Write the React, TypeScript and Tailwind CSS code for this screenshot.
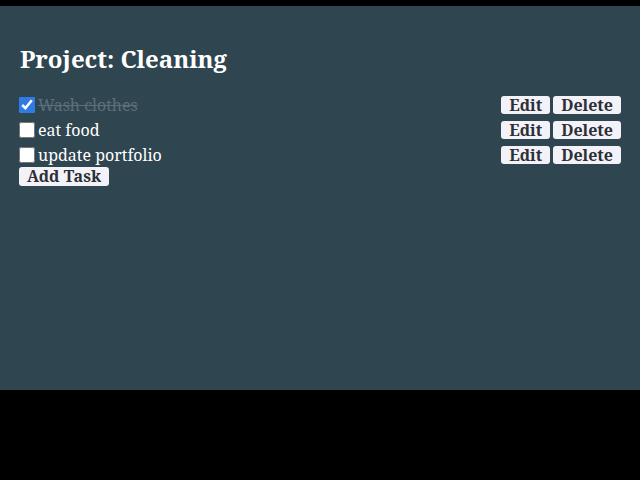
import React, { useState } from 'react';

type Task = { id: number; title: string; done: boolean };

const initialTasks: Task[] = [
  { id: 1, title: 'Wash clothes', done: true },
  { id: 2, title: 'eat food', done: false },
  { id: 3, title: 'update portfolio', done: false },
];

const btn =
  'bg-[#f3f2f8] text-[#2b2f36] font-bold text-[16px] leading-[18px] rounded-[3px] px-[8px] h-[18px]';

const App: React.FC = () => {
  const [tasks, setTasks] = useState<Task[]>(initialTasks);

  const toggle = (id: number) =>
    setTasks((ts) => ts.map((t) => (t.id === id ? { ...t, done: !t.done } : t)));

  return (
    <div className="min-h-[480px] bg-black pt-[6px] font-['Noto_Serif','DejaVu_Serif',serif]">
      <div className="h-[384px] bg-[#2f4550] px-[19px] pt-[35px] text-white">
        <h1 className="text-[24px] font-bold leading-[36px] mb-[18px] ml-[1px]">Project: Cleaning</h1>

        <div className="flex flex-col gap-[6px]">
          {tasks.map((task) => (
            <div key={task.id} className="flex items-center justify-between h-[19px]">
              <label className="flex items-center gap-[3px] text-[16px]">
                <input
                  type="checkbox"
                  checked={task.done}
                  onChange={() => toggle(task.id)}
                  className="w-[16px] h-[16px] m-0 accent-[#2f7ae5]"
                />
                <span className={task.done ? 'line-through text-[#5b6f79]' : ''}>{task.title}</span>
              </label>
              <div className="flex gap-[3px]">
                <button className={btn}>Edit</button>
                <button className={btn}>Delete</button>
              </div>
            </div>
          ))}
        </div>
        <button className={`${btn} mt-[2px] h-[19px]`}>Add Task</button>
      </div>
    </div>
  );
};

export default App;
